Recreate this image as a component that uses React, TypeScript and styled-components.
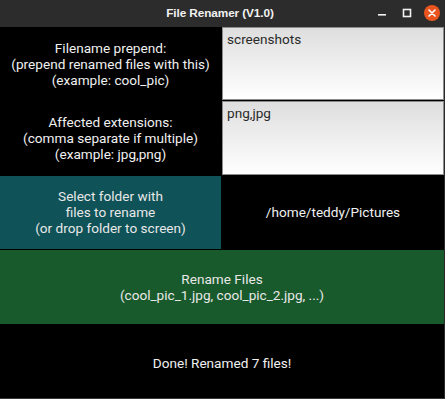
import styled, { createGlobalStyle } from "styled-components";

const GlobalStyle = createGlobalStyle`
  html, body {
    margin: 0;
    padding: 0;
    background: #000;
  }
  * {
    box-sizing: border-box;
  }
`;

const Window = styled.div`
  width: 445px;
  height: 399px;
  display: flex;
  flex-direction: column;
  background: #000;
  border-right: 1px solid #2a2a2a;
  border-bottom: 1px solid #3a3a3a;
  font-family: Roboto, "Liberation Sans", sans-serif;
  overflow: hidden;
`;

const TitleBar = styled.header`
  height: 27px;
  flex: none;
  display: grid;
  grid-template-columns: 1fr auto 1fr;
  align-items: center;
  background: #2c2c2c;
  color: #f2f2f2;
  padding: 0 4px 1px 0;
`;

const Title = styled.div`
  grid-column: 2;
  font-family: "Liberation Sans", Arial, sans-serif;
  font-weight: 700;
  font-size: 11.8px;
  letter-spacing: -0.1px;
`;

const Controls = styled.div`
  grid-column: 3;
  justify-self: end;
  display: flex;
  align-items: center;
  gap: 9px;
`;

const ControlButton = styled.span<{ $close?: boolean }>`
  width: 16px;
  height: 16px;
  border-radius: 50%;
  display: flex;
  align-items: center;
  justify-content: center;
  background: ${(p) => (p.$close ? "#e9541f" : "transparent")};
`;

const Grid = styled.main`
  flex: 1;
  display: grid;
  grid-template-columns: 221px 1fr;
  grid-template-rows: repeat(5, 1fr);
  gap: 1px 1px;
  background: #000;
`;

const Label = styled.div`
  display: flex;
  align-items: center;
  justify-content: center;
  text-align: center;
  color: #f0f0f0;
  font-size: 13.6px;
  line-height: 16px;
  white-space: pre-line;
`;

const Field = styled.div`
  background: linear-gradient(#dedede, #ffffff);
  border: 1px solid #8c8c8c;
  color: #2a2a2a;
  font-size: 13.6px;
  padding: 3px 4px;
  line-height: 16px;
`;

const Button = styled.div<{ $bg: string; $wide?: boolean }>`
  grid-column: ${(p) => (p.$wide ? "1 / span 2" : "auto")};
  background: ${(p) => p.$bg};
  color: #e8e8e8;
  display: flex;
  align-items: center;
  justify-content: center;
  text-align: center;
  font-size: 13.6px;
  line-height: 16px;
  white-space: pre-line;
`;

const Status = styled(Label)`
  grid-column: 1 / span 2;
  padding-top: 4px;
`;

export default function App() {
  return (
    <>
      <GlobalStyle />
      <Window>
        <TitleBar>
          <Title>File Renamer (V1.0)</Title>
          <Controls>
            <ControlButton>
              <svg width="10" height="10" viewBox="0 0 10 10">
                <rect x="1" y="6" width="8" height="1.6" fill="#f2f2f2" />
              </svg>
            </ControlButton>
            <ControlButton>
              <svg width="10" height="10" viewBox="0 0 10 10">
                <rect x="1.5" y="1.5" width="7" height="7" fill="none" stroke="#f2f2f2" strokeWidth="1.6" />
              </svg>
            </ControlButton>
            <ControlButton $close>
              <svg width="10" height="10" viewBox="0 0 10 10">
                <path d="M2 2 L8 8 M8 2 L2 8" stroke="#fff" strokeWidth="1.6" strokeLinecap="round" />
              </svg>
            </ControlButton>
          </Controls>
        </TitleBar>
        <Grid>
          <Label>{"Filename prepend:\n(prepend renamed files with this)\n(example: cool_pic)"}</Label>
          <Field>screenshots</Field>
          <Label>{"Affected extensions:\n(comma separate if multiple)\n(example: jpg,png)"}</Label>
          <Field>png,jpg</Field>
          <Button $bg="#0f5257">{"Select folder with\nfiles to rename\n(or drop folder to screen)"}</Button>
          <Label>/home/teddy/Pictures</Label>
          <Button $bg="#185a2c" $wide>{"Rename Files\n(cool_pic_1.jpg, cool_pic_2.jpg, ...)"}</Button>
          <Status>Done! Renamed 7 files!</Status>
        </Grid>
      </Window>
    </>
  );
}
